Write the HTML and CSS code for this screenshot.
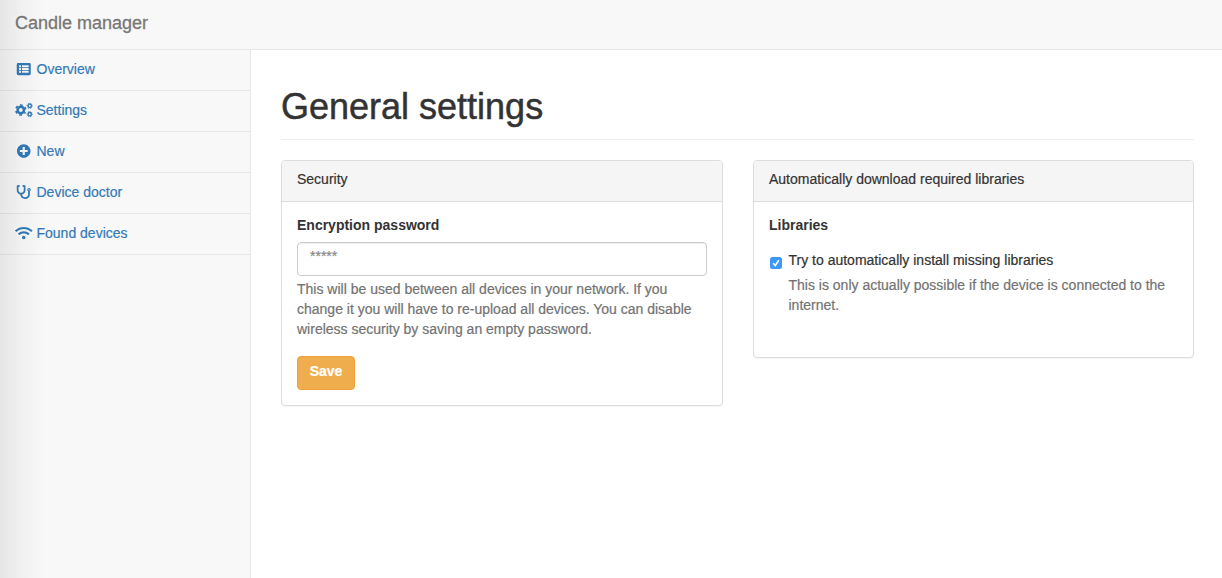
FILE: index.html
```
<!DOCTYPE html>
<html lang="en">
<head>
<meta charset="utf-8">
<title>Candle manager</title>
<link rel="stylesheet" href="styles.css">
</head>
<body>
<header class="navbar"><a class="brand">Candle manager</a></header>
<div class="wrapper">
  <nav class="sidebar">
    <a class="nav-item"><svg class="icon" viewBox="-64 0 640 512"><path fill-rule="evenodd" d="M48 32h416a48 48 0 0 1 48 48v352a48 48 0 0 1-48 48H48a48 48 0 0 1-48-48V80a48 48 0 0 1 48-48zM84 118v70h72v-70zm0 102v70h72v-70zm0 102v70h72v-70zM192 118v70h244v-70zm0 102v70h244v-70zm0 102v70h244v-70z"/></svg><span>Overview</span></a>
    <a class="nav-item"><svg class="icon" viewBox="0 0 640 512"><g fill="none" stroke="currentColor"><circle cx="212" cy="256" r="116" stroke-width="92"/><circle cx="212" cy="256" r="182" stroke-width="60" stroke-dasharray="95.3 95.3" stroke-dashoffset="47.6" transform="rotate(30 212 256)"/><circle cx="538" cy="104" r="62" stroke-width="50"/><circle cx="538" cy="104" r="94" stroke-width="36" stroke-dasharray="56 42.4" stroke-dashoffset="28"/><circle cx="538" cy="408" r="62" stroke-width="50"/><circle cx="538" cy="408" r="94" stroke-width="36" stroke-dasharray="56 42.4" stroke-dashoffset="28"/></g></svg><span>Settings</span></a>
    <a class="nav-item"><svg class="icon" viewBox="-64 0 640 512"><path d="M256 8C119 8 8 119 8 256s111 248 248 248 248-111 248-248S393 8 256 8zm144 276c0 6.600-5.400 12-12 12h-92v92c0 6.600-5.400 12-12 12h-56c-6.600 0-12-5.400-12-12v-92h-92c-6.600 0-12-5.400-12-12v-56c0-6.600 5.400-12 12-12h92v-92c0-6.600 5.400-12 12-12h56c6.600 0 12 5.400 12 12v92h92c6.600 0 12 5.400 12 12v56z"/></svg><span>New</span></a>
    <a class="nav-item"><svg class="icon" viewBox="-64 0 640 512"><path fill-rule="evenodd" d="M447.100 112c-34.200.5-62.300 28.400-63 62.600-.5 24.300 12.500 45.600 32 56.800V344c0 57.300-50.200 104-112 104-60 0-109.200-44.100-111.900-99.200C265 333.800 320 269.200 320 192V36.600c0-11.400-8.100-21.300-19.300-23.500L237.800.5c-13-2.600-25.600 5.800-28.200 18.800L206.400 35c-2.600 13 5.800 25.600 18.800 28.200l30.700 6.100v121.400c0 52.900-42.200 96.700-95.100 97.200-53.400.5-96.900-42.700-96.900-96V69.400l30.700-6.100c13-2.600 21.400-15.200 18.800-28.200l-3.100-15.700C107.700 6.400 95.100-2 82.100.6L19.300 13C8.100 15.300 0 25.100 0 36.600V192c0 77.300 55.100 142 128.100 156.800C130.700 439.200 208.600 512 304 512c97 0 176-75.400 176-168V231.400c19.100-11.100 32-31.700 32-55.400 0-35.700-29.200-64.500-64.900-64zm.9 88a24 24 0 1 1 0-48 24 24 0 1 1 0 48z"/></svg><span>Device doctor</span></a>
    <a class="nav-item"><svg class="icon" viewBox="0 0 640 512"><path d="M634.910 154.880C457.740-8.990 182.190-8.930 5.090 154.880c-6.660 6.160-6.790 16.590-.35 22.980l34.240 33.970c6.140 6.100 16.020 6.230 22.400.38 145.920-133.680 371.300-133.710 517.250 0 6.380 5.850 16.260 5.710 22.400-.38l34.240-33.970c6.430-6.390 6.300-16.820-.36-22.980zM320 352c-35.350 0-64 28.650-64 64s28.650 64 64 64 64-28.650 64-64-28.650-64-64-64zm202.670-83.590c-115.260-101.930-290.210-101.820-405.340 0-6.900 6.100-7.120 16.690-.57 23.150l34.440 33.990c6 5.920 15.660 6.320 22.050.8 83.950-72.570 209.740-72.410 293.490 0 6.390 5.520 16.050 5.130 22.050-.8l34.440-33.990c6.560-6.460 6.330-17.060-.56-23.150z"/></svg><span>Found devices</span></a>
  </nav>
  <main class="page">
    <h1 class="page-header">General settings</h1>
    <div class="row">
      <section class="panel">
        <div class="panel-heading">Security</div>
        <div class="panel-body">
          <label class="label" for="password">Encryption password</label>
          <input class="form-control" id="password" type="text" placeholder="*****">
          <p class="help">This will be used between all devices in your network. If you change it you will have to re-upload all devices. You can disable wireless security by saving an empty password.</p>
          <button class="btn" type="button">Save</button>
        </div>
      </section>
      <section class="panel">
        <div class="panel-heading">Automatically download required libraries</div>
        <div class="panel-body libraries">
          <div class="label">Libraries</div>
          <div class="check-row">
            <svg class="checkbox" viewBox="0 0 12 12"><rect width="12" height="12" rx="2.500"/><path d="M3.200 6.300 5.200 8.600 8.800 3.300"/></svg>
            <div>
              <div class="check-label">Try to automatically install missing libraries</div>
              <p class="help">This is only actually possible if the device is connected to the internet.</p>
            </div>
          </div>
        </div>
      </section>
    </div>
  </main>
</div>
<div class="edge-shadow"></div>
</body>
</html>
```
FILE: styles.css
```
* { box-sizing: border-box; }
body {
  margin: 0;
  height: 578px;
  display: flex;
  flex-direction: column;
  overflow: hidden;
  background: #fff;
  color: #333;
  font: 14px/20px "Liberation Sans", Arial, sans-serif;
  -webkit-text-stroke: .2px;
}
.navbar {
  height: 50px;
  flex: none;
  padding: 13px 15px;
  background: #f8f8f8;
  border-bottom: 1px solid #e7e7e7;
}
.brand { display: block; color: #777; font-size: 18px; line-height: 20px; -webkit-text-stroke: .3px; }
.wrapper { display: flex; flex: 1; }
.sidebar {
  width: 251px;
  flex: none;
  background: #f8f8f8;
  border-right: 1px solid #e7e7e7;
}
.nav-item {
  display: flex;
  align-items: center;
  gap: 4px;
  height: 41px;
  padding: 0 15px 2px;
  border-bottom: 1px solid #e7e7e7;
  color: #337ab7;
}
.icon { width: 17.500px; height: 14px; fill: currentColor; overflow: visible; }
.page { flex: 1; padding: 0 28px 0 30px; }
.page-header {
  margin: 37px 0 20px;
  padding-bottom: 12px;
  border-bottom: 1px solid #eee;
  font-size: 36px;
  line-height: 40px;
  font-weight: 400;
  -webkit-text-stroke: .5px;
}
.row { display: grid; grid-template-columns: 442px 441px; gap: 30px; align-items: start; }
.panel {
  border: 1px solid #ddd;
  border-radius: 4px;
  background: #fff;
  box-shadow: 0 1px 1px rgba(0, 0, 0, .05);
}
.panel-heading {
  height: 41px;
  padding: 8px 15px;
  background: #f5f5f5;
  border-bottom: 1px solid #ddd;
  border-radius: 3px 3px 0 0;
}
.panel-body { padding: 13px 15px 15px; }
.label { display: block; font-weight: 700; -webkit-text-stroke: 0; }
.form-control {
  display: block;
  width: 100%;
  height: 34px;
  margin: 7px 0 3px;
  padding: 3px 12px 9px;
  border: 1px solid #ccc;
  border-radius: 4px;
  background: #fff;
  box-shadow: inset 0 1px 1px rgba(0, 0, 0, .075);
  font: inherit;
}
.form-control::placeholder { color: #888; opacity: 1; }
.help { margin: 0; color: #737373; }
.btn {
  display: block;
  width: 58px;
  height: 34px;
  margin-top: 17px;
  padding: 4px 0 8px;
  border: 1px solid #eea236;
  border-radius: 4px;
  background: #f0ad4e;
  color: #fff;
  font: 700 14px/20px "Liberation Sans", Arial, sans-serif;
}
.libraries { height: 155px; }
.check-row { display: flex; gap: 6.500px; margin: 15px 0 0 1px; }
.checkbox { width: 12px; height: 12px; flex: none; margin-top: 7px; fill: #3b99fc; }
.checkbox path { fill: none; stroke: #fff; stroke-width: 1.600; }
.check-label { margin-bottom: 5px; }
.edge-shadow {
  position: absolute;
  inset: 0 auto 0 0;
  width: 45px;
  background: linear-gradient(90deg, rgba(0, 0, 0, .075), rgba(0, 0, 0, .03) 45%, rgba(0, 0, 0, 0));
  pointer-events: none;
}
```
